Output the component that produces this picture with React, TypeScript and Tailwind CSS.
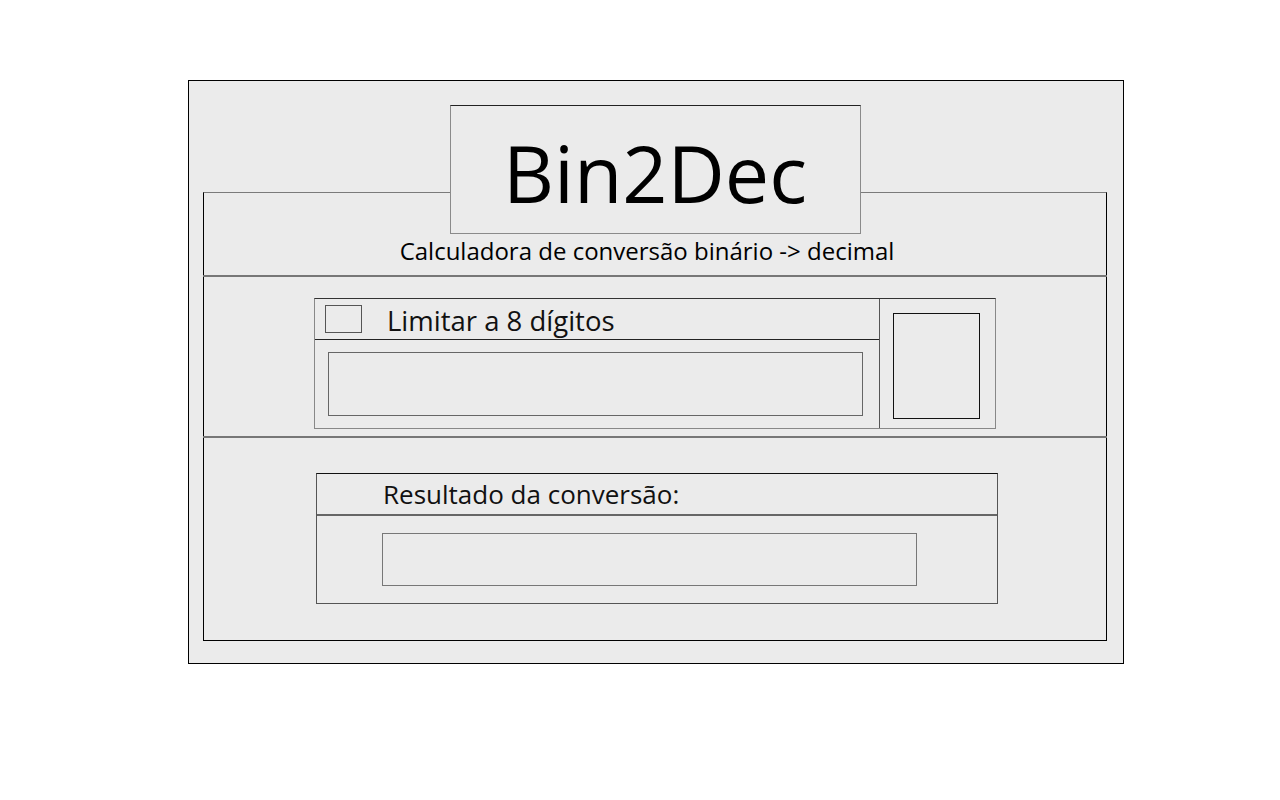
import React from 'react';

export default function App() {
  return (
    <div className="w-full h-[800px] bg-white pt-[80px] pl-[188px]" style={{ fontFamily: '"Open Sans", "Noto Sans", sans-serif' }}>
      <div className="w-[936px] h-[584px] border border-black bg-[#ebebeb] pt-[111px] pl-[14px]">
        <div className="w-[904px] h-[449px] border border-black border-t-[#7a7a7a]">
          {/* header */}
          <div className="-mx-px border-b-2 border-[#777]">
            <div className="mx-auto -mt-[88px] w-[411px] h-[129px] border border-[#8a8a8a] border-t-[#222] bg-[#ebebeb] flex items-center justify-center">
              <span className="text-[79px] leading-none text-black pt-[6px]">Bin2Dec</span>
            </div>
            <p className="text-center pr-[16px] text-[24px] leading-[30px] pt-[2px] pb-[9px] text-black">
              Calculadora de conversão binário -&gt; decimal
            </p>
          </div>

          {/* input group */}
          <div className="-mx-px border-b-2 border-[#777] pt-[21px] pb-[7px] pl-[111px]">
            <div className="w-[682px] h-[131px] border border-[#888] border-t-[#333] flex">
              <div className="w-[565px] border-r border-[#555] flex flex-col">
                <div className="h-[41px] border-b border-[#222] flex items-start">
                  <div className="ml-[10px] mt-[6px] w-[37px] h-[28px] border border-[#555]" />
                  <span className="ml-[25px] mt-[4px] text-[27.5px] leading-[36px] text-[#111]">Limitar a 8 dígitos</span>
                </div>
                <div className="ml-[13px] mt-[12px] w-[535px] h-[64px] border border-[#666]" />
              </div>
              <div className="pl-[13px] pt-[14px]">
                <div className="w-[87px] h-[106px] border border-[#111]" />
              </div>
            </div>
          </div>

          {/* result */}
          <div className="pt-[35px] pl-[112px]">
            <div className="w-[682px] h-[131px] border border-[#555] border-t-[#111]">
              <div className="h-[42px] border-b-2 border-[#666] pl-[66px] flex items-center">
                <span className="text-[26px] leading-[34px] text-[#111]">Resultado da conversão:</span>
              </div>
              <div className="ml-[65px] mt-[17px] w-[535px] h-[53px] border border-[#777]" />
            </div>
          </div>
        </div>
      </div>
    </div>
  );
}
